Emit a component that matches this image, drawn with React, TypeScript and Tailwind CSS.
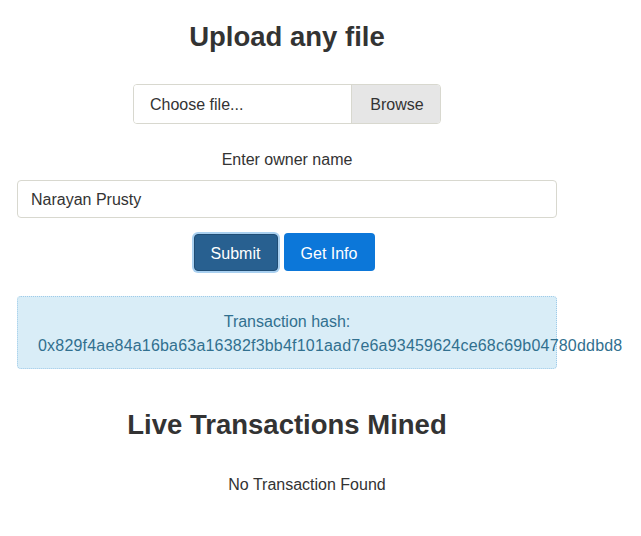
export default function App() {
  return (
    <div className="min-h-[536px] bg-white font-['Liberation_Sans',Arial,sans-serif] text-[16px] text-[#333]">
      <div className="w-[574px] px-[17px] flex flex-col items-center">
        {/* Upload */}
        <h2 className="mt-[22px] text-[27.5px] leading-[30px] font-bold text-[#333]">Upload any file</h2>

        <div className="mt-[32px] flex h-[40px] w-[308px] rounded-[4px] border border-[#d8d8cf] overflow-hidden">
          <div className="flex-1 flex items-center pl-[16px] pt-[2px] bg-white">Choose file...</div>
          <div className="w-[89px] flex items-center justify-center pt-[2px] pl-[2px] border-l border-[#d8d8cf] bg-[#e6e6e6]">
            Browse
          </div>
        </div>

        <div className="mt-[26px] leading-[20px]">Enter owner name</div>
        <input
          className="mt-[10px] h-[38px] w-full rounded-[4px] border border-[#d8d8cf] px-[13px] pt-[2px] text-[16px] text-[#333] outline-none"
          defaultValue="Narayan Prusty"
        />

        <div className="mt-[15px] mr-[6px] flex items-center gap-[6px]">
          <button className="h-[37px] w-[84px] rounded-[4px] bg-[#286090] pt-[3px] text-white ring-2 ring-[#a9d0f0] border border-[#204d74]">
            Submit
          </button>
          <button className="h-[38px] w-[91px] rounded-[4px] bg-[#0c77d9] pt-[3px] text-white">Get Info</button>
        </div>

        {/* Transaction hash */}
        <div className="mt-[25px] w-full rounded-[4px] border border-dotted border-[#9fcbe9] bg-[#d9edf7] px-5 pt-[13px] pb-[10px] text-center leading-[24px] text-[#31708f]">
          <div>Transaction hash:</div>
          <div className="whitespace-nowrap tracking-[0.2px]">
            0x829f4ae84a16ba63a16382f3bb4f101aad7e6a93459624ce68c69b04780ddbd8
          </div>
        </div>

        {/* Live transactions */}
        <h2 className="mt-[41px] text-[27.5px] leading-[30px] font-bold text-[#333]">Live Transactions Mined</h2>
        <div className="mt-[35px] ml-[40px] leading-[20px]">No Transaction Found</div>
      </div>
    </div>
  );
}
